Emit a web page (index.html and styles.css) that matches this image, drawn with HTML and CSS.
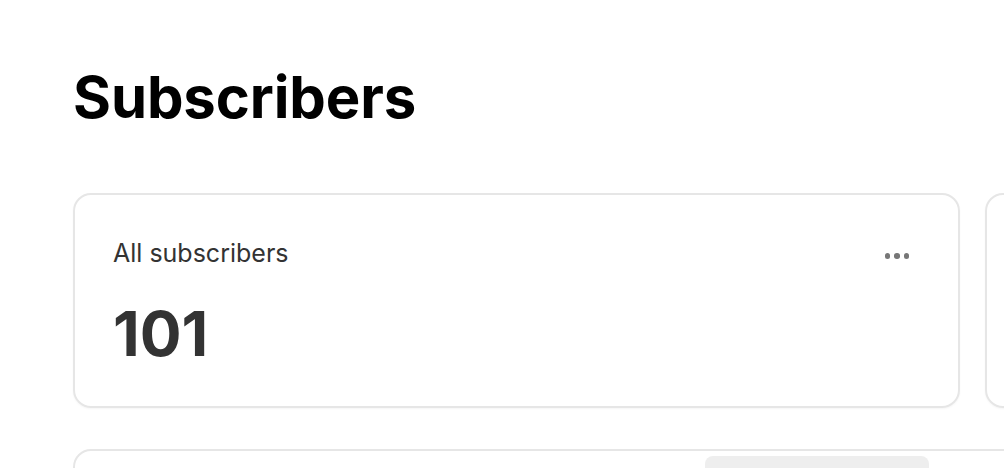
FILE: index.html
```html
<!DOCTYPE html>
<html>
<head>
<meta charset="utf-8">
<link rel="stylesheet" href="styles.css">
</head>
<body>
<main class="page">
  <h1 class="title">Subscribers</h1>
  <div class="cards">
    <section class="card">
      <div class="card-head">
        <span class="card-label">All subscribers</span>
        <span class="more"><i></i><i></i><i></i></span>
      </div>
      <div class="card-value">101</div>
    </section>
    <section class="card"></section>
  </div>
  <section class="panel">
    <div class="panel-bar"><span class="pill"></span></div>
  </section>
</main>
</body>
</html>
```
FILE: styles.css
```css
html, body {
  margin: 0;
  padding: 0;
  background: #fff;
  overflow: hidden;
}
body {
  font-family: Inter, "Liberation Sans", sans-serif;
  color: #000;
}
.page {
  padding: 62px 0 0 73px;
  width: 2000px;
}
.title {
  margin: 0;
  font-size: 58px;
  font-weight: 700;
  line-height: 70px;
  letter-spacing: -0.1px;
}
.cards {
  display: flex;
  gap: 25px;
  margin-top: 61px;
}
.card {
  box-sizing: border-box;
  width: 887px;
  height: 215px;
  border: 2px solid #e6e6e6;
  border-radius: 18px;
  padding: 43px 38px 0 38px;
  box-shadow: 0 1px 2px rgba(0,0,0,0.04);
}
.card-head {
  display: flex;
  justify-content: space-between;
  align-items: center;
  height: 30px;
}
.card-label {
  font-size: 25px;
  color: #333;
}
.more {
  display: flex;
  gap: 4px;
  margin: 6px 11px 0 0;
}
.more i {
  width: 5.5px;
  height: 5.5px;
  border-radius: 50%;
  background: #777;
}
.card-value {
  margin-top: 31px;
  font-size: 62px;
  font-weight: 700;
  color: #333;
  line-height: 70px;
}
.panel {
  box-sizing: border-box;
  width: 1900px;
  height: 200px;
  margin-top: 41px;
  border: 2px solid #e6e6e6;
  border-radius: 18px;
}
.panel-bar {
  padding: 5px 0 0 630px;
}
.pill {
  display: block;
  width: 224px;
  height: 40px;
  background: #eee;
  border-radius: 8px;
}
```
